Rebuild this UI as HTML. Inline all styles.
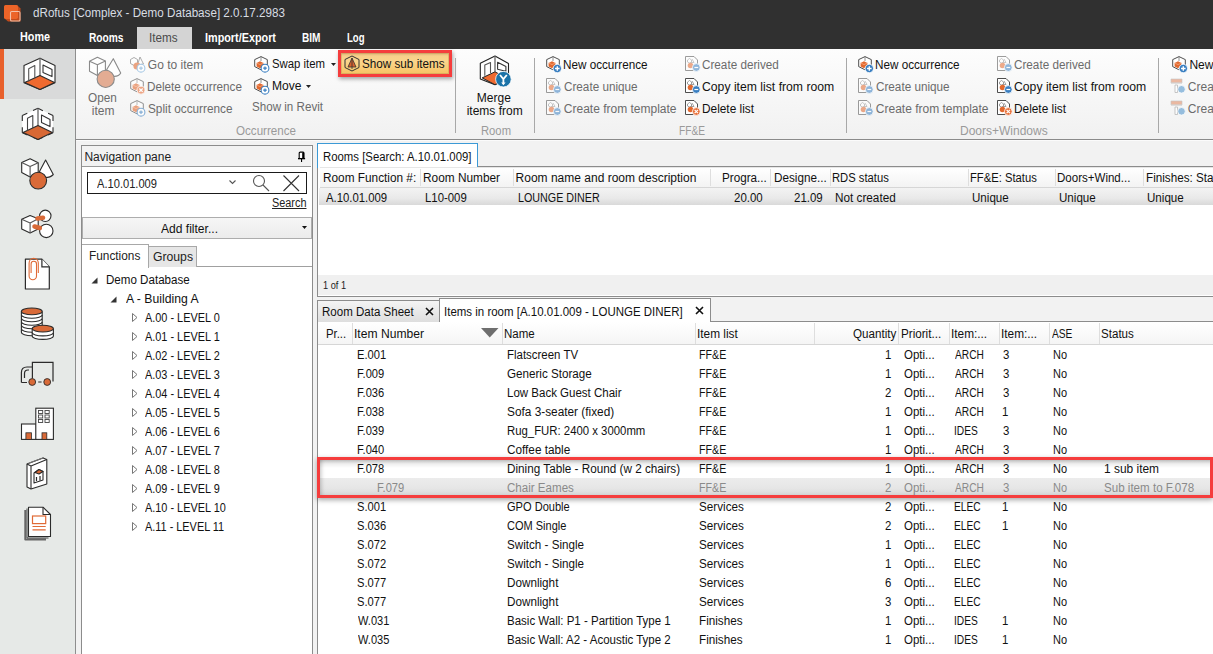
<!DOCTYPE html>
<html><head><meta charset="utf-8"><style>
html,body{margin:0;padding:0;width:1213px;height:654px;overflow:hidden;background:#f2f2f2;position:relative}
body>div,body>svg{position:absolute}
.t{position:absolute;transform-origin:0 0;font-family:"Liberation Sans",sans-serif;font-size:12px;line-height:16px;white-space:nowrap}
</style></head><body>
<div style="left:0px;top:0px;width:1213px;height:49px;background:#303030"></div>
<svg style="left:2px;top:3px" width="22" height="22" viewBox="0 0 22 22"><path d="M3.5 2 H15 L18.5 5.5 V18.5 H6 L2 15 V3.5 Z" fill="#c24b1c"/><rect x="2" y="2" width="14" height="14" rx="1.8" fill="#ec6428"/><rect x="8.5" y="8.5" width="9.5" height="9.5" rx="1.3" fill="none" stroke="#f3cbb6" stroke-width="1.1" opacity="0.9"/></svg>
<div class="t" style="left:32.5px;top:5px;color:#d8dde3;font-size:12.5px;transform:scaleX(0.932);">dRofus [Complex - Demo Database] 2.0.17.2983</div>
<div style="left:137px;top:27px;width:55px;height:22px;background:#d4d4d4"></div>
<div class="t" style="left:20.3px;top:29px;color:#fff;font-size:12.5px;font-weight:bold;transform:scaleX(0.864);">Home</div>
<div class="t" style="left:88.8px;top:30px;color:#fff;font-size:12.5px;font-weight:bold;transform:scaleX(0.814);">Rooms</div>
<div class="t" style="left:148.9px;top:30px;color:#4a4a4a;transform:scaleX(0.975);">Items</div>
<div class="t" style="left:205.3px;top:30px;color:#fff;font-size:12.5px;font-weight:bold;transform:scaleX(0.866);">Import/Export</div>
<div class="t" style="left:301.9px;top:30px;color:#fff;font-size:12.5px;font-weight:bold;transform:scaleX(0.807);">BIM</div>
<div class="t" style="left:347.2px;top:30px;color:#fff;font-size:12.5px;font-weight:bold;transform:scaleX(0.764);">Log</div>
<div style="left:0px;top:49px;width:75px;height:605px;background:#e6e9e7"></div>
<div style="left:75px;top:49px;width:1px;height:605px;background:#8e8e8e"></div>
<div style="left:4px;top:49px;width:71px;height:50px;background:#d9dada"></div>
<div style="left:0px;top:49px;width:4px;height:50px;background:#e8602c"></div>
<div style="left:76px;top:49px;width:1137px;height:90px;background:linear-gradient(#fdfdfd,#f1f1f1)"></div>
<div style="left:76px;top:139px;width:1137px;height:1px;background:#8a8a8a"></div>
<div style="left:76px;top:140px;width:1137px;height:1px;background:#fbfbfb"></div>
<svg style="left:18px;top:54px" width="44" height="40" viewBox="0 0 44 40"><g stroke-linejoin="round" stroke-linecap="round">
<path d="M22 4.3 L37 11.6 V28.8 L22 35.5 L6 28.8 V11.6 Z" fill="#fff" stroke="#2b2b2b" stroke-width="1.1"/>
<path d="M22 4.3 V21.4" stroke="#666" stroke-width="1.3"/>
<path d="M6.7 28.5 L22 21.4 L36.5 28.5 L22 35.5 Z" fill="#ef6a30" stroke="#2b2b2b" stroke-width="1.1"/>
<path d="M10.7 26.9 V14.7 L16.8 11.6 V23.9" fill="none" stroke="#555" stroke-width="1.1"/>
<path d="M25 11 L34 15.6 V22.6 L25 18.4 Z" fill="none" stroke="#333" stroke-width="1.1"/></g></svg>
<svg style="left:18px;top:104px" width="44" height="40" viewBox="0 0 44 40"><g stroke-linejoin="round">
<path d="M20 4.3 L35 11.6 V28.8 L20 35.5 L4.3 28.8 V11.6 Z" fill="#fff" stroke="none"/>
<path d="M20.0 4.3 L15.0 6.6 M20.0 4.3 L24.9 6.7 M35.0 11.6 L30.1 9.2 M35.0 11.6 L35.0 17.1 M35.0 28.8 L35.0 23.3 M35.0 28.8 L30.0 31.0 M20.0 35.5 L25.0 33.3 M20.0 35.5 L14.9 33.3 M4.3 28.8 L9.4 31.0 M4.3 28.8 L4.3 23.3 M4.3 11.6 L4.3 17.1 M4.3 11.6 L9.3 9.3 " stroke="#2b2b2b" stroke-width="1.1" fill="none"/>
<path d="M20 4.3 V21.4" stroke="#666" stroke-width="1.3"/>
<path d="M5 28.5 L20 21.4 L34.3 28.5 L20 35.5 Z" fill="#d86834" stroke="#2b2b2b" stroke-width="1.1"/>
<path d="M9.5 26.9 V14.3 L14.8 11.6 V23.9" fill="none" stroke="#444" stroke-width="1.1"/>
<path d="M23.5 11 L32 15.6 V22.6 L23.5 18.4 Z" fill="none" stroke="#333" stroke-width="1.1"/></g></svg>
<svg style="left:16px;top:152px" width="44" height="44" viewBox="0 0 44 44"><g stroke="#2b2b2b" stroke-width="1.1" fill="#fff" stroke-linejoin="round">
<path d="M5.7 10.4 L14.1 6.7 L22.2 10.8 L22.2 21 L14.1 24.9 L5.7 20.5 Z"/><path d="M5.7 10.4 L14.1 14.5 L22.2 10.8 M14.1 14.5 V24.9" fill="none" stroke="#555"/>
<path d="M29.6 8.1 L37.3 22.5 Q34 26 28 25.6 L23.5 19.5 Z"/>
<circle cx="22.2" cy="28.6" r="8.4" fill="#d96a38"/></g></svg>
<svg style="left:16px;top:202px" width="44" height="44" viewBox="0 0 44 44"><g stroke="#2b2b2b" stroke-width="1.1" fill="#fff" stroke-linejoin="round">
<path d="M5.7 17.2 L14.1 13.5 L22.2 16.8 L22.2 27 L14.1 31 L5.7 26.9 Z"/><path d="M5.7 17.2 L14.1 20.9 L22.2 16.8 M14.1 20.9 V31" fill="none" stroke="#555"/>
<circle cx="29.3" cy="13.8" r="5.7"/><circle cx="30.3" cy="28.9" r="6.7"/></g>
<path d="M21.5 16.5 L27 15.8 M18.5 24.5 L23.8 26" stroke="#d96a38" stroke-width="4.6" stroke-linecap="round"/></svg>
<svg style="left:16px;top:252px" width="44" height="44" viewBox="0 0 44 44"><path d="M9.4 7.1 H25.9 L33.3 14.8 V37 H9.4 Z" fill="#fff" stroke="#2b2b2b" stroke-width="1.2" stroke-linejoin="round"/>
<path d="M25.9 7.1 V14.8 H33.3" fill="#fff" stroke="#2b2b2b" stroke-width="1.2"/>
<path d="M22.3 21 V11 A4.6 4.6 0 0 0 13.1 11 V24 A3.7 3.7 0 0 0 20.5 24 V12 A2.7 2.7 0 0 0 15.1 12 V21" fill="none" stroke="#e06a36" stroke-width="1.1"/></svg>
<svg style="left:16px;top:302px" width="44" height="44" viewBox="0 0 44 44"><path d="M5.4 26.900000000000002 V30.3 A10.4 3.4 0 0 0 26.2 30.3 V26.900000000000002" fill="#fff" stroke="#2b2b2b" stroke-width="1.1"/><path d="M5.4 23.400000000000002 V26.8 A10.4 3.4 0 0 0 26.2 26.8 V23.400000000000002" fill="#fff" stroke="#2b2b2b" stroke-width="1.1"/><path d="M5.4 19.900000000000002 V23.3 A10.4 3.4 0 0 0 26.2 23.3 V19.900000000000002" fill="#fff" stroke="#2b2b2b" stroke-width="1.1"/><path d="M5.4 16.400000000000002 V19.8 A10.4 3.4 0 0 0 26.2 19.8 V16.400000000000002" fill="#fff" stroke="#2b2b2b" stroke-width="1.1"/><path d="M5.4 12.9 V16.3 A10.4 3.4 0 0 0 26.2 16.3 V12.9" fill="#fff" stroke="#2b2b2b" stroke-width="1.1"/><path d="M5.4 9.4 V12.8 A10.4 3.4 0 0 0 26.2 12.8 V9.4" fill="#fff" stroke="#2b2b2b" stroke-width="1.1"/><ellipse cx="15.8" cy="9.4" rx="10.4" ry="3.4" fill="#d96a38" stroke="#2b2b2b" stroke-width="1.1"/><path d="M16.2 30.6 V34 A10.6 3.4 0 0 0 37.4 34 V30.6" fill="#fff" stroke="#2b2b2b" stroke-width="1.1"/><path d="M16.2 27.1 V30.5 A10.6 3.4 0 0 0 37.4 30.5 V27.1" fill="#fff" stroke="#2b2b2b" stroke-width="1.1"/><ellipse cx="26.8" cy="26.6" rx="10.6" ry="3.4" fill="#d96a38" stroke="#2b2b2b" stroke-width="1.1"/></svg>
<svg style="left:16px;top:352px" width="44" height="40" viewBox="0 0 44 40"><g stroke="#2b2b2b" stroke-width="1.2" fill="none">
<path d="M16.4 26.5 V10.3 H37 V29.5"/><path d="M5.4 30.5 V20.5 Q5.4 15 11 15 H16.4 M8.5 26 V21.5 Q8.5 18 12 18 H13"/>
<path d="M5.4 30.5 H11 M22.2 30 H25.6"/></g>
<circle cx="16.2" cy="30" r="3.4" fill="#d96a38" stroke="#2b2b2b" stroke-width="0.9"/><circle cx="31.2" cy="30" r="3.4" fill="#d96a38" stroke="#2b2b2b" stroke-width="0.9"/></svg>
<svg style="left:16px;top:402px" width="44" height="44" viewBox="0 0 44 44"><g stroke="#2b2b2b" stroke-width="1.1" fill="#fff">
<rect x="5.5" y="22" width="14.8" height="15.4"/><rect x="19.8" y="6.2" width="17.6" height="31.2"/></g><rect x="22.5" y="8.5" width="4.2" height="3" fill="none" stroke="#444" stroke-width="0.9"/><rect x="29" y="8.5" width="4.2" height="3" fill="none" stroke="#444" stroke-width="0.9"/><rect x="22.5" y="13" width="4.2" height="3" fill="none" stroke="#444" stroke-width="0.9"/><rect x="29" y="13" width="4.2" height="3" fill="none" stroke="#444" stroke-width="0.9"/><rect x="22.5" y="17.5" width="4.2" height="3" fill="none" stroke="#444" stroke-width="0.9"/><rect x="29" y="17.5" width="4.2" height="3" fill="none" stroke="#444" stroke-width="0.9"/>
<rect x="9.9" y="30.8" width="5.5" height="6.6" fill="#d96a38" stroke="#2b2b2b" stroke-width="0.8"/><rect x="26" y="30.8" width="4.8" height="6.6" fill="#d96a38" stroke="#2b2b2b" stroke-width="0.8"/></svg>
<svg style="left:16px;top:452px" width="44" height="44" viewBox="0 0 44 44"><g stroke="#2b2b2b" stroke-width="1.1" fill="#fff" stroke-linejoin="round">
<path d="M11 12 L27 6 L30.8 7.5 V32 L15 37 L11 35 Z"/><path d="M11 12 L15 14 L30.8 7.5 M15 14 V37" fill="none"/>
<path d="M13 11 L28 5.5 M12 11.5 L27.5 5.8" fill="none" stroke="#777" stroke-width="0.7"/>
<path d="M18 21 L23 17.5 L27 19.5 V28 L18 31 Z"/><path d="M19 20.5 L23 17.5 L27 19.5 L23 22 Z" fill="#d96a38"/>
<path d="M20.5 25 V29 M24 24 V28.5" fill="none" stroke="#2b2b2b" stroke-width="1.2"/></g></svg>
<svg style="left:16px;top:502px" width="44" height="44" viewBox="0 0 44 44"><g stroke-linejoin="round">
<path d="M9.3 8 V37.5 H30" fill="none" stroke="#666" stroke-width="2"/>
<path d="M11 6.5 V36 H32.5" fill="none" stroke="#333" stroke-width="0.9"/>
<path d="M12.5 5.2 H27 L34.5 12.5 V34.5 H12.5 Z" fill="#fff" stroke="#2b2b2b" stroke-width="1.1"/><path d="M27 5.2 V12.5 H34.5" fill="none" stroke="#2b2b2b" stroke-width="1.1"/></g>
<g stroke="#e06a36" stroke-width="1.2" fill="none"><rect x="16.5" y="14" width="13.2" height="7.6"/><path d="M16.5 24.5 H29.7 M16.5 27.8 H29.7"/></g></svg>
<svg style="left:84px;top:52px" width="42" height="40" viewBox="0 0 42 40"><g stroke="#8a8a8a" stroke-width="1.1" fill="#fff" stroke-linejoin="round">
<path d="M5.5 9.2 L13.4 5.2 L21.4 8.9 V20 L13.4 23.5 L5.5 19.3 Z"/><path d="M5.5 9.2 L13.4 12.8 L21.4 8.9 M13.4 12.8 V23.5" fill="none"/>
<path d="M29.3 6.7 L36.7 21.1 Q35 24.5 30 24.4 L22.6 17.7 Z"/>
<circle cx="21.7" cy="26.9" r="8.6" fill="#e3ac93"/></g></svg>
<div class="t" style="left:88.4px;top:90px;color:#6b6b6b;transform:scaleX(0.981);">Open</div>
<div class="t" style="left:91.8px;top:103px;color:#6b6b6b;">item</div>
<svg style="left:129px;top:56px;opacity:0.6" width="17" height="17" viewBox="0 0 17 17"><path d="M1.5 3.5 L5 1.5 L8.5 3.5 V7.5 L5 9.5 L1.5 7.5 Z" fill="#fff" stroke="#555" stroke-width="0.8"/><path d="M11 1 L14.5 8 L8.5 9 Z" fill="#fff" stroke="#555" stroke-width="0.8"/><circle cx="8" cy="10" r="3.6" fill="#e2692f"/><circle cx="12" cy="12.2" r="3.9" fill="#fff" stroke="#6fa8d8" stroke-width="1.1"/><path d="M10.2 12.2 H13.8 M12 10.4 V14" stroke="#6fa8d8" stroke-width="1.2"/></svg>
<div class="t" style="left:147.8px;top:57px;color:#6b6b6b;">Go to item</div>
<svg style="left:129px;top:78px;opacity:0.6" width="17" height="17" viewBox="0 0 17 17"><path d="M8 0.6 L14.3 3.6 V10.6 L8 13.8 L1.7 10.6 V3.6 Z" fill="#fff" stroke="#3a3a3a" stroke-width="0.9"/><path d="M8 0.6 V5" stroke="#777" stroke-width="0.8"/><path d="M7 5.2 L10.4 6.9 V10.6 L7 12.3 L3.6 10.6 V6.9 Z" fill="#e2692f"/><path d="M3.6 6.9 L7 8.6 L10.4 6.9" fill="none" stroke="#f6b08c" stroke-width="0.7"/><circle cx="12" cy="12.2" r="4" fill="#e8703a" stroke="#fff" stroke-width="0.8"/><path d="M10.3 10.5 L13.7 13.9 M13.7 10.5 L10.3 13.9" stroke="#fff" stroke-width="1.3"/></svg>
<div class="t" style="left:147.4px;top:79px;color:#6b6b6b;transform:scaleX(0.975);">Delete occurrence</div>
<svg style="left:129px;top:100px;opacity:0.6" width="17" height="17" viewBox="0 0 17 17"><path d="M8 0.6 L14.3 3.6 V10.6 L8 13.8 L1.7 10.6 V3.6 Z" fill="#fff" stroke="#3a3a3a" stroke-width="0.9"/><path d="M8 0.6 V5" stroke="#777" stroke-width="0.8"/><path d="M7 5.2 L10.4 6.9 V10.6 L7 12.3 L3.6 10.6 V6.9 Z" fill="#e2692f"/><path d="M3.6 6.9 L7 8.6 L10.4 6.9" fill="none" stroke="#f6b08c" stroke-width="0.7"/><circle cx="12" cy="12.2" r="3.9" fill="#fff" stroke="#3a7fc1" stroke-width="1.1"/><path d="M10.2 12.2 H13.8 M12 10.4 V14" stroke="#3a7fc1" stroke-width="1.2"/></svg>
<div class="t" style="left:147.9px;top:101px;color:#6b6b6b;transform:scaleX(0.982);">Split occurrence</div>
<svg style="left:253px;top:56px;opacity:1" width="17" height="17" viewBox="0 0 17 17"><path d="M8 0.6 L14.3 3.6 V10.6 L8 13.8 L1.7 10.6 V3.6 Z" fill="#fff" stroke="#3a3a3a" stroke-width="0.9"/><path d="M8 0.6 V5" stroke="#777" stroke-width="0.8"/><path d="M7 5.2 L10.4 6.9 V10.6 L7 12.3 L3.6 10.6 V6.9 Z" fill="#e2692f"/><path d="M3.6 6.9 L7 8.6 L10.4 6.9" fill="none" stroke="#f6b08c" stroke-width="0.7"/><circle cx="12" cy="12.2" r="3.9" fill="#fff" stroke="#3a7fc1" stroke-width="1.1"/><path d="M10.2 12.2 H13.8 M12 10.4 V14" stroke="#3a7fc1" stroke-width="1.2"/></svg>
<div class="t" style="left:271.8px;top:56px;color:#111;transform:scaleX(0.946);">Swap item</div>
<svg style="left:331px;top:63px" width="5" height="3"><path d="M0 0 H5 L2.5 3 Z" fill="#222"/></svg>
<svg style="left:253px;top:78px;opacity:1" width="17" height="17" viewBox="0 0 17 17"><path d="M8 0.6 L14.3 3.6 V10.6 L8 13.8 L1.7 10.6 V3.6 Z" fill="#fff" stroke="#3a3a3a" stroke-width="0.9"/><path d="M8 0.6 V5" stroke="#777" stroke-width="0.8"/><path d="M7 5.2 L10.4 6.9 V10.6 L7 12.3 L3.6 10.6 V6.9 Z" fill="#e2692f"/><path d="M3.6 6.9 L7 8.6 L10.4 6.9" fill="none" stroke="#f6b08c" stroke-width="0.7"/><circle cx="12" cy="12.2" r="3.9" fill="#fff" stroke="#3a7fc1" stroke-width="1.1"/><path d="M10.2 12.2 H13.8 M12 10.4 V14" stroke="#3a7fc1" stroke-width="1.2"/></svg>
<div class="t" style="left:271.5px;top:78px;color:#111;transform:scaleX(1.005);">Move</div>
<svg style="left:306px;top:85px" width="5" height="3"><path d="M0 0 H5 L2.5 3 Z" fill="#222"/></svg>
<div class="t" style="left:251.8px;top:99px;color:#6b6b6b;transform:scaleX(0.968);">Show in Revit</div>
<div class="t" style="left:236.0px;top:123px;color:#9a9a9a;transform:scaleX(0.967);">Occurrence</div>
<div style="left:338px;top:50px;width:114px;height:27px;background:#f53d3d;box-shadow:1px 2px 4px rgba(0,0,0,0.35)"></div>
<div style="left:341px;top:53px;width:108px;height:21px;background:linear-gradient(#d9b176,#f7d08a 3px,#fad58c 40%,#f6c463);box-shadow:inset 0 0 0 1px rgba(190,150,80,0.45);"></div>
<svg style="left:344px;top:55px" width="16" height="17" viewBox="0 0 16 17"><path d="M8 1 L15 4.5 V12.5 L8 16 L1 12.5 V4.5 Z" fill="none" stroke="#333" stroke-width="1"/><path d="M8 3 L12 12 H4 Z" fill="#d9622e" stroke="#333" stroke-width="0.8"/><path d="M8 3 V14" stroke="#333" stroke-width="0.8"/></svg>
<div class="t" style="left:361.9px;top:56px;color:#111;transform:scaleX(0.975);">Show sub items</div>
<div style="left:455px;top:58px;width:1px;height:75px;background:#a8a8a8"></div>
<svg style="left:470px;top:50px" width="50" height="42" viewBox="0 0 50 42"><g stroke-linejoin="round">
<path d="M25 6.1 L38.5 13.5 V28 L25 34.7 L10.3 28.9 V13.2 Z" fill="#fff" stroke="#222" stroke-width="1.1"/>
<path d="M25 6.1 V21.8" stroke="#666" stroke-width="1.3"/>
<path d="M12.2 27.9 L25 21.8 L36 28 L25 34.7 Z" fill="#ef6a30" stroke="#222" stroke-width="1"/>
<path d="M14.8 25.7 V15.1 L20.5 12.5 V23.1" fill="none" stroke="#555" stroke-width="1.1"/>
<path d="M27.6 12.2 L35.9 16.4 V21.2 L27.6 19.3 Z" fill="none" stroke="#333" stroke-width="1.1"/></g>
<circle cx="33.4" cy="29.2" r="7.8" fill="#1b73a8" stroke="#fff" stroke-width="0.8"/>
<path d="M30 25 L33.4 29 L36.8 25 M33.4 29 V33.5" fill="none" stroke="#fff" stroke-width="1.8"/><path d="M31.2 32.5 L33.4 35.2 L35.6 32.5 Z" fill="#fff"/></svg>
<div class="t" style="left:476.8px;top:90px;color:#111;">Merge</div>
<div class="t" style="left:466.7px;top:102.5px;color:#111;">items from</div>
<div class="t" style="left:481.3px;top:123px;color:#9a9a9a;transform:scaleX(0.937);">Room</div>
<div style="left:534px;top:58px;width:1px;height:75px;background:#a8a8a8"></div>
<svg style="left:545px;top:56px;opacity:1" width="17" height="17" viewBox="0 0 17 17"><path d="M8 0.6 L14.3 3.6 V10.6 L8 13.8 L1.7 10.6 V3.6 Z" fill="#fff" stroke="#3a3a3a" stroke-width="0.9"/><path d="M8 0.6 V5" stroke="#777" stroke-width="0.8"/><path d="M7 5.2 L10.4 6.9 V10.6 L7 12.3 L3.6 10.6 V6.9 Z" fill="#e2692f"/><path d="M3.6 6.9 L7 8.6 L10.4 6.9" fill="none" stroke="#f6b08c" stroke-width="0.7"/><circle cx="12.3" cy="12.5" r="4.2" fill="#3a7fc1" stroke="#fff" stroke-width="0.8"/><path d="M10 12.5 H14.6 M12.3 10.2 V14.8" stroke="#fff" stroke-width="1.4"/></svg>
<div class="t" style="left:563.4px;top:57px;color:#111;transform:scaleX(0.975);">New occurrence</div>
<svg style="left:545px;top:77px;opacity:0.55" width="17" height="17" viewBox="0 0 17 17"><path d="M1.5 1.5 H10 L13.5 5 V15.5 H1.5 Z" fill="#fff" stroke="#3a3a3a" stroke-width="0.9"/><path d="M3.5 5 L5.5 3.5 L7.5 5 V7 L5.5 8 L3.5 7 Z M8 4 L10 7.5 H7" fill="none" stroke="#666" stroke-width="0.6"/><circle cx="6.5" cy="10.5" r="2.8" fill="#e2692f"/><circle cx="12.3" cy="12.5" r="3.9" fill="#3a7fc1" stroke="#fff" stroke-width="0.8"/><path d="M10.4 12.5 H14.2" stroke="#fff" stroke-width="1.2"/></svg>
<div class="t" style="left:563.8px;top:79px;color:#6b6b6b;transform:scaleX(0.976);">Create unique</div>
<svg style="left:545px;top:99px;opacity:0.55" width="17" height="17" viewBox="0 0 17 17"><path d="M1.5 1.5 H10 L13.5 5 V15.5 H1.5 Z" fill="#fff" stroke="#3a3a3a" stroke-width="0.9"/><path d="M3.5 5 L5.5 3.5 L7.5 5 V7 L5.5 8 L3.5 7 Z M8 4 L10 7.5 H7" fill="none" stroke="#666" stroke-width="0.6"/><circle cx="6.5" cy="10.5" r="2.8" fill="#e2692f"/><circle cx="12.3" cy="12.5" r="3.9" fill="#3a7fc1" stroke="#fff" stroke-width="0.8"/><path d="M10.4 12.5 H14.2" stroke="#fff" stroke-width="1.2"/></svg>
<div class="t" style="left:563.8px;top:101px;color:#6b6b6b;">Create from template</div>
<svg style="left:684px;top:55px;opacity:0.55" width="17" height="17" viewBox="0 0 17 17"><path d="M1.5 1.5 H10 L13.5 5 V15.5 H1.5 Z" fill="#fff" stroke="#3a3a3a" stroke-width="0.9"/><path d="M3.5 5 L5.5 3.5 L7.5 5 V7 L5.5 8 L3.5 7 Z M8 4 L10 7.5 H7" fill="none" stroke="#666" stroke-width="0.6"/><circle cx="6.5" cy="10.5" r="2.8" fill="#e2692f"/><circle cx="12.3" cy="12.5" r="3.9" fill="#3a7fc1" stroke="#fff" stroke-width="0.8"/><path d="M10.4 12.5 H14.2" stroke="#fff" stroke-width="1.2"/></svg>
<div class="t" style="left:702.4px;top:57px;color:#6b6b6b;transform:scaleX(0.976);">Create derived</div>
<svg style="left:684px;top:77px;opacity:1" width="17" height="17" viewBox="0 0 17 17"><path d="M1.5 1.5 H10 L13.5 5 V15.5 H1.5 Z" fill="#fff" stroke="#3a3a3a" stroke-width="0.9"/><path d="M3.5 5 L5.5 3.5 L7.5 5 V7 L5.5 8 L3.5 7 Z M8 4 L10 7.5 H7" fill="none" stroke="#666" stroke-width="0.6"/><circle cx="6.5" cy="10.5" r="2.8" fill="#e2692f"/><circle cx="12.3" cy="12.5" r="3.9" fill="#3a7fc1" stroke="#fff" stroke-width="0.8"/><path d="M10.4 12.5 H14.2" stroke="#fff" stroke-width="1.2"/></svg>
<div class="t" style="left:702.4px;top:79px;color:#111;transform:scaleX(1.017);">Copy item list from room</div>
<svg style="left:684px;top:99px;opacity:1" width="17" height="17" viewBox="0 0 17 17"><path d="M1.5 1.5 H10 L13.5 5 V15.5 H1.5 Z" fill="#fff" stroke="#3a3a3a" stroke-width="0.9"/><path d="M3.5 5 L5.5 3.5 L7.5 5 V7 L5.5 8 L3.5 7 Z M8 4 L10 7.5 H7" fill="none" stroke="#666" stroke-width="0.6"/><circle cx="6.5" cy="10.5" r="2.8" fill="#e2692f"/><circle cx="12.3" cy="12.5" r="3.9" fill="#e8703a" stroke="#fff" stroke-width="0.8"/><path d="M10.6 10.8 L14 14.2 M14 10.8 L10.6 14.2" stroke="#fff" stroke-width="1.2"/></svg>
<div class="t" style="left:702.0px;top:101px;color:#111;transform:scaleX(0.987);">Delete list</div>
<div class="t" style="left:679.0px;top:123px;color:#9a9a9a;transform:scaleX(0.848);">FF&amp;E</div>
<div style="left:846px;top:58px;width:1px;height:75px;background:#a8a8a8"></div>
<svg style="left:857px;top:56px;opacity:1" width="17" height="17" viewBox="0 0 17 17"><path d="M8 0.6 L14.3 3.6 V10.6 L8 13.8 L1.7 10.6 V3.6 Z" fill="#fff" stroke="#3a3a3a" stroke-width="0.9"/><path d="M8 0.6 V5" stroke="#777" stroke-width="0.8"/><path d="M7 5.2 L10.4 6.9 V10.6 L7 12.3 L3.6 10.6 V6.9 Z" fill="#e2692f"/><path d="M3.6 6.9 L7 8.6 L10.4 6.9" fill="none" stroke="#f6b08c" stroke-width="0.7"/><circle cx="12.3" cy="12.5" r="4.2" fill="#3a7fc1" stroke="#fff" stroke-width="0.8"/><path d="M10 12.5 H14.6 M12.3 10.2 V14.8" stroke="#fff" stroke-width="1.4"/></svg>
<div class="t" style="left:875.4px;top:57px;color:#111;transform:scaleX(0.975);">New occurrence</div>
<svg style="left:857px;top:77px;opacity:0.55" width="17" height="17" viewBox="0 0 17 17"><path d="M1.5 1.5 H10 L13.5 5 V15.5 H1.5 Z" fill="#fff" stroke="#3a3a3a" stroke-width="0.9"/><path d="M3.5 5 L5.5 3.5 L7.5 5 V7 L5.5 8 L3.5 7 Z M8 4 L10 7.5 H7" fill="none" stroke="#666" stroke-width="0.6"/><circle cx="6.5" cy="10.5" r="2.8" fill="#e2692f"/><circle cx="12.3" cy="12.5" r="3.9" fill="#3a7fc1" stroke="#fff" stroke-width="0.8"/><path d="M10.4 12.5 H14.2" stroke="#fff" stroke-width="1.2"/></svg>
<div class="t" style="left:875.8px;top:79px;color:#6b6b6b;transform:scaleX(0.976);">Create unique</div>
<svg style="left:857px;top:99px;opacity:0.55" width="17" height="17" viewBox="0 0 17 17"><path d="M1.5 1.5 H10 L13.5 5 V15.5 H1.5 Z" fill="#fff" stroke="#3a3a3a" stroke-width="0.9"/><path d="M3.5 5 L5.5 3.5 L7.5 5 V7 L5.5 8 L3.5 7 Z M8 4 L10 7.5 H7" fill="none" stroke="#666" stroke-width="0.6"/><circle cx="6.5" cy="10.5" r="2.8" fill="#e2692f"/><circle cx="12.3" cy="12.5" r="3.9" fill="#3a7fc1" stroke="#fff" stroke-width="0.8"/><path d="M10.4 12.5 H14.2" stroke="#fff" stroke-width="1.2"/></svg>
<div class="t" style="left:875.8px;top:101px;color:#6b6b6b;">Create from template</div>
<svg style="left:996px;top:55px;opacity:0.55" width="17" height="17" viewBox="0 0 17 17"><path d="M1.5 1.5 H10 L13.5 5 V15.5 H1.5 Z" fill="#fff" stroke="#3a3a3a" stroke-width="0.9"/><path d="M3.5 5 L5.5 3.5 L7.5 5 V7 L5.5 8 L3.5 7 Z M8 4 L10 7.5 H7" fill="none" stroke="#666" stroke-width="0.6"/><circle cx="6.5" cy="10.5" r="2.8" fill="#e2692f"/><circle cx="12.3" cy="12.5" r="3.9" fill="#3a7fc1" stroke="#fff" stroke-width="0.8"/><path d="M10.4 12.5 H14.2" stroke="#fff" stroke-width="1.2"/></svg>
<div class="t" style="left:1014.4px;top:57px;color:#6b6b6b;transform:scaleX(0.976);">Create derived</div>
<svg style="left:996px;top:77px;opacity:1" width="17" height="17" viewBox="0 0 17 17"><path d="M1.5 1.5 H10 L13.5 5 V15.5 H1.5 Z" fill="#fff" stroke="#3a3a3a" stroke-width="0.9"/><path d="M3.5 5 L5.5 3.5 L7.5 5 V7 L5.5 8 L3.5 7 Z M8 4 L10 7.5 H7" fill="none" stroke="#666" stroke-width="0.6"/><circle cx="6.5" cy="10.5" r="2.8" fill="#e2692f"/><circle cx="12.3" cy="12.5" r="3.9" fill="#3a7fc1" stroke="#fff" stroke-width="0.8"/><path d="M10.4 12.5 H14.2" stroke="#fff" stroke-width="1.2"/></svg>
<div class="t" style="left:1014.4px;top:79px;color:#111;transform:scaleX(1.017);">Copy item list from room</div>
<svg style="left:996px;top:99px;opacity:1" width="17" height="17" viewBox="0 0 17 17"><path d="M1.5 1.5 H10 L13.5 5 V15.5 H1.5 Z" fill="#fff" stroke="#3a3a3a" stroke-width="0.9"/><path d="M3.5 5 L5.5 3.5 L7.5 5 V7 L5.5 8 L3.5 7 Z M8 4 L10 7.5 H7" fill="none" stroke="#666" stroke-width="0.6"/><circle cx="6.5" cy="10.5" r="2.8" fill="#e2692f"/><circle cx="12.3" cy="12.5" r="3.9" fill="#e8703a" stroke="#fff" stroke-width="0.8"/><path d="M10.6 10.8 L14 14.2 M14 10.8 L10.6 14.2" stroke="#fff" stroke-width="1.2"/></svg>
<div class="t" style="left:1014.0px;top:101px;color:#111;transform:scaleX(0.987);">Delete list</div>
<div class="t" style="left:960.0px;top:123px;color:#9a9a9a;">Doors+Windows</div>
<div style="left:1158px;top:58px;width:1px;height:75px;background:#a8a8a8"></div>
<svg style="left:1171px;top:56px;opacity:1" width="17" height="17" viewBox="0 0 17 17"><path d="M8 0.6 L14.3 3.6 V10.6 L8 13.8 L1.7 10.6 V3.6 Z" fill="#fff" stroke="#3a3a3a" stroke-width="0.9"/><path d="M8 0.6 V5" stroke="#777" stroke-width="0.8"/><path d="M7 5.2 L10.4 6.9 V10.6 L7 12.3 L3.6 10.6 V6.9 Z" fill="#e2692f"/><path d="M3.6 6.9 L7 8.6 L10.4 6.9" fill="none" stroke="#f6b08c" stroke-width="0.7"/><circle cx="12.3" cy="12.5" r="4.2" fill="#3a7fc1" stroke="#fff" stroke-width="0.8"/><path d="M10 12.5 H14.6 M12.3 10.2 V14.8" stroke="#fff" stroke-width="1.4"/></svg>
<div class="t" style="left:1189.4px;top:57px;color:#111;">New</div>
<svg style="left:1170px;top:77px;opacity:0.8" width="17" height="17" viewBox="0 0 17 17"><path d="M1 2 H12 V6 H1 Z" fill="#e8a98c" stroke="#bbb" stroke-width="0.6"/><path d="M1 6 H12" stroke="#ccc" stroke-width="1"/><path d="M5 8 V15.5 H7.5 V8 Z" fill="#fff" stroke="#aaa" stroke-width="0.8"/><circle cx="11.5" cy="12.3" r="3.8" fill="#7fb0d8" stroke="#fff" stroke-width="0.8"/></svg>
<div class="t" style="left:1187.8px;top:79px;color:#6b6b6b;">Create</div>
<svg style="left:1170px;top:99px;opacity:0.8" width="17" height="17" viewBox="0 0 17 17"><path d="M1 2 H12 V6 H1 Z" fill="#e8a98c" stroke="#bbb" stroke-width="0.6"/><path d="M1 6 H12" stroke="#ccc" stroke-width="1"/><path d="M5 8 V15.5 H7.5 V8 Z" fill="#fff" stroke="#aaa" stroke-width="0.8"/><circle cx="11.5" cy="12.3" r="3.8" fill="#7fb0d8" stroke="#fff" stroke-width="0.8"/></svg>
<div class="t" style="left:1187.8px;top:101px;color:#6b6b6b;">Create</div>
<div style="left:81px;top:145px;width:230px;height:520px;border:1px solid #8c8c8c;background:#fff"></div>
<div style="left:82px;top:146px;width:229px;height:20px;background:#f2f2f2"></div>
<div style="left:82px;top:166px;width:229px;height:1px;background:#9a9a9a"></div>
<div class="t" style="left:84.4px;top:149px;color:#222;">Navigation pane</div>
<svg style="left:297px;top:151px" width="9" height="12" viewBox="0 0 9 12"><path d="M2.2 7.2 V2.2 Q2.2 1.1 3.3 1.1 H6 Q7 1.1 7 2.2 V7.2" fill="#fff" stroke="#000" stroke-width="1.1"/><rect x="5.2" y="1.5" width="1.8" height="5.7" fill="#000"/><rect x="1" y="7" width="7.1" height="1.3" fill="#000"/><rect x="4" y="8" width="1.1" height="3" fill="#000"/></svg>
<div style="left:87px;top:172px;width:218px;height:20px;border:1.5px solid #1a1a1a;background:#fff"></div>
<div class="t" style="left:97.4px;top:176px;color:#222;transform:scaleX(0.927);">A.10.01.009</div>
<svg style="left:229px;top:180px" width="7" height="5"><path d="M0.5 0.5 L3.5 3.5 L6.5 0.5" fill="none" stroke="#555" stroke-width="1.1"/></svg>
<svg style="left:251px;top:174px" width="20" height="18"><circle cx="8" cy="7" r="5.5" fill="none" stroke="#555" stroke-width="1.1"/><path d="M12 11 L18 17" stroke="#555" stroke-width="1.1"/></svg>
<svg style="left:283px;top:175px" width="17" height="17"><path d="M0.5 0.5 L16 16 M16 0.5 L0.5 16" stroke="#333" stroke-width="1.1"/></svg>
<div class="t" style="left:271.5px;top:195px;color:#222;transform:scaleX(0.907);text-decoration:underline;">Search</div>
<div style="left:82px;top:217px;width:228px;height:20px;border:1px solid #adadad;background:linear-gradient(#f6f6f6,#ececec)"></div>
<div class="t" style="left:161.0px;top:220.5px;color:#111;transform:scaleX(1.005);">Add filter...</div>
<svg style="left:302px;top:226px" width="5" height="3"><path d="M0 0 H5 L2.5 3 Z" fill="#111"/></svg>
<div style="left:82px;top:266px;width:230px;height:1px;background:#a0a0a0"></div>
<div style="left:148px;top:246px;width:47px;height:20px;border:1px solid #a8a8a8;border-bottom:none;background:#e6e6e6"></div>
<div style="left:82px;top:244px;width:66px;height:23px;border:1px solid #a8a8a8;border-bottom:none;border-left:none;background:#fff"></div>
<div class="t" style="left:89.3px;top:248px;color:#222;transform:scaleX(0.986);">Functions</div>
<div class="t" style="left:152.6px;top:249px;color:#222;transform:scaleX(1.016);">Groups</div>
<svg style="left:91px;top:277px" width="7" height="7"><path d="M6.5 0.5 V6.5 H0.5 Z" fill="#333"/></svg>
<div class="t" style="left:106.1px;top:272px;color:#111;transform:scaleX(0.965);">Demo Database</div>
<svg style="left:110px;top:296px" width="7" height="7"><path d="M6.5 0.5 V6.5 H0.5 Z" fill="#333"/></svg>
<div class="t" style="left:126.0px;top:291px;color:#111;transform:scaleX(1.018);">A - Building A</div>
<svg style="left:132px;top:313px" width="6" height="9"><path d="M0.5 0.5 L5 4.5 L0.5 8.5 Z" fill="none" stroke="#777" stroke-width="1"/></svg>
<div class="t" style="left:144.7px;top:310px;color:#111;transform:scaleX(0.908);">A.00 - LEVEL 0</div>
<svg style="left:132px;top:332px" width="6" height="9"><path d="M0.5 0.5 L5 4.5 L0.5 8.5 Z" fill="none" stroke="#777" stroke-width="1"/></svg>
<div class="t" style="left:144.7px;top:329px;color:#111;transform:scaleX(0.908);">A.01 - LEVEL 1</div>
<svg style="left:132px;top:351px" width="6" height="9"><path d="M0.5 0.5 L5 4.5 L0.5 8.5 Z" fill="none" stroke="#777" stroke-width="1"/></svg>
<div class="t" style="left:144.7px;top:348px;color:#111;transform:scaleX(0.908);">A.02 - LEVEL 2</div>
<svg style="left:132px;top:370px" width="6" height="9"><path d="M0.5 0.5 L5 4.5 L0.5 8.5 Z" fill="none" stroke="#777" stroke-width="1"/></svg>
<div class="t" style="left:144.7px;top:367px;color:#111;transform:scaleX(0.908);">A.03 - LEVEL 3</div>
<svg style="left:132px;top:389px" width="6" height="9"><path d="M0.5 0.5 L5 4.5 L0.5 8.5 Z" fill="none" stroke="#777" stroke-width="1"/></svg>
<div class="t" style="left:144.7px;top:386px;color:#111;transform:scaleX(0.908);">A.04 - LEVEL 4</div>
<svg style="left:132px;top:408px" width="6" height="9"><path d="M0.5 0.5 L5 4.5 L0.5 8.5 Z" fill="none" stroke="#777" stroke-width="1"/></svg>
<div class="t" style="left:144.7px;top:405px;color:#111;transform:scaleX(0.908);">A.05 - LEVEL 5</div>
<svg style="left:132px;top:427px" width="6" height="9"><path d="M0.5 0.5 L5 4.5 L0.5 8.5 Z" fill="none" stroke="#777" stroke-width="1"/></svg>
<div class="t" style="left:144.7px;top:424px;color:#111;transform:scaleX(0.908);">A.06 - LEVEL 6</div>
<svg style="left:132px;top:446px" width="6" height="9"><path d="M0.5 0.5 L5 4.5 L0.5 8.5 Z" fill="none" stroke="#777" stroke-width="1"/></svg>
<div class="t" style="left:144.7px;top:443px;color:#111;transform:scaleX(0.908);">A.07 - LEVEL 7</div>
<svg style="left:132px;top:465px" width="6" height="9"><path d="M0.5 0.5 L5 4.5 L0.5 8.5 Z" fill="none" stroke="#777" stroke-width="1"/></svg>
<div class="t" style="left:144.7px;top:462px;color:#111;transform:scaleX(0.908);">A.08 - LEVEL 8</div>
<svg style="left:132px;top:484px" width="6" height="9"><path d="M0.5 0.5 L5 4.5 L0.5 8.5 Z" fill="none" stroke="#777" stroke-width="1"/></svg>
<div class="t" style="left:144.7px;top:481px;color:#111;transform:scaleX(0.908);">A.09 - LEVEL 9</div>
<svg style="left:132px;top:503px" width="6" height="9"><path d="M0.5 0.5 L5 4.5 L0.5 8.5 Z" fill="none" stroke="#777" stroke-width="1"/></svg>
<div class="t" style="left:144.7px;top:500px;color:#111;transform:scaleX(0.908);">A.10 - LEVEL 10</div>
<svg style="left:132px;top:522px" width="6" height="9"><path d="M0.5 0.5 L5 4.5 L0.5 8.5 Z" fill="none" stroke="#777" stroke-width="1"/></svg>
<div class="t" style="left:144.7px;top:519px;color:#111;transform:scaleX(0.908);">A.11 - LEVEL 11</div>
<div style="left:317px;top:166px;width:900px;height:129px;border:1px solid #8c8c8c;background:#fff"></div>
<div style="left:317px;top:143px;width:159px;height:24px;border:1px solid #3c9ad6;border-bottom:none;background:#fff"></div>
<div class="t" style="left:322.5px;top:149px;color:#111;transform:scaleX(0.947);">Rooms [Search: A.10.01.009]</div>
<div style="left:320px;top:167px;width:893px;height:21px;background:linear-gradient(#ffffff,#f3f3f3);border-top:1px solid #e6e6e6;border-bottom:1px solid #d6d6d6;box-sizing:border-box"></div>
<div style="left:420px;top:169px;width:1px;height:17px;background:#dedede"></div>
<div style="left:513px;top:169px;width:1px;height:17px;background:#dedede"></div>
<div style="left:710px;top:169px;width:1px;height:17px;background:#dedede"></div>
<div style="left:770px;top:169px;width:1px;height:17px;background:#dedede"></div>
<div style="left:830px;top:169px;width:1px;height:17px;background:#dedede"></div>
<div style="left:968px;top:169px;width:1px;height:17px;background:#dedede"></div>
<div style="left:1055px;top:169px;width:1px;height:17px;background:#dedede"></div>
<div style="left:1143px;top:169px;width:1px;height:17px;background:#dedede"></div>
<div class="t" style="left:322.8px;top:170px;color:#111;transform:scaleX(0.984);">Room Function #:</div>
<div class="t" style="left:422.7px;top:170px;color:#111;transform:scaleX(0.987);">Room Number</div>
<div class="t" style="left:515.6px;top:170px;color:#111;">Room name and room description</div>
<div class="t" style="left:722.2px;top:170px;color:#111;transform:scaleX(0.974);">Progra...</div>
<div class="t" style="left:774.0px;top:170px;color:#111;transform:scaleX(0.976);">Designe...</div>
<div class="t" style="left:832.1px;top:170px;color:#111;transform:scaleX(0.937);">RDS status</div>
<div class="t" style="left:970.1px;top:170px;color:#111;transform:scaleX(0.936);">FF&amp;E: Status</div>
<div class="t" style="left:1057.1px;top:170px;color:#111;transform:scaleX(0.961);">Doors+Wind...</div>
<div class="t" style="left:1146.0px;top:170px;color:#111;transform:scaleX(0.973);">Finishes: Status</div>
<div style="left:319px;top:188px;width:894px;height:17px;background:linear-gradient(#f3f3f3,#e9e9e9 60%,#d9d9d9)"></div>
<div class="t" style="left:325.5px;top:190px;color:#111;transform:scaleX(0.945);">A.10.01.009</div>
<div class="t" style="left:424.7px;top:190px;color:#111;transform:scaleX(0.947);">L10-009</div>
<div class="t" style="left:517.8px;top:190px;color:#111;transform:scaleX(0.895);">LOUNGE DINER</div>
<div class="t" style="left:733.7px;top:190px;color:#111;transform:scaleX(0.956);">20.00</div>
<div class="t" style="left:794.1px;top:190px;color:#111;transform:scaleX(0.956);">21.09</div>
<div class="t" style="left:834.7px;top:190px;color:#111;transform:scaleX(0.979);">Not created</div>
<div class="t" style="left:972.1px;top:190px;color:#111;transform:scaleX(0.966);">Unique</div>
<div class="t" style="left:1059.1px;top:190px;color:#111;transform:scaleX(0.966);">Unique</div>
<div class="t" style="left:1147.1px;top:190px;color:#111;transform:scaleX(0.966);">Unique</div>
<div style="left:318px;top:275px;width:895px;height:20px;background:#f0f0f0"></div>
<div class="t" style="left:323.3px;top:277px;color:#222;font-size:11px;transform:scaleX(0.836);">1 of 1</div>
<div style="left:317px;top:321px;width:900px;height:340px;border:1px solid #8c8c8c;background:#fff"></div>
<div style="left:317px;top:300px;width:122px;height:21px;border:1px solid #8c8c8c;border-bottom:none;background:linear-gradient(#f4f4f4,#dedede)"></div>
<div class="t" style="left:322.4px;top:304px;color:#111;transform:scaleX(0.961);">Room Data Sheet</div>
<svg style="left:425px;top:307px" width="9" height="9"><path d="M1 1 L8 8 M8 1 L1 8" stroke="#111" stroke-width="1.6"/></svg>
<div style="left:439px;top:298px;width:270px;height:24px;border:1px solid #8c8c8c;border-bottom:none;background:#fff"></div>
<div class="t" style="left:444.1px;top:304px;color:#111;transform:scaleX(0.957);">Items in room [A.10.01.009 - LOUNGE DINER]</div>
<svg style="left:695px;top:306px" width="9" height="9"><path d="M1 1 L8 8 M8 1 L1 8" stroke="#111" stroke-width="1.6"/></svg>
<div style="left:318px;top:322px;width:895px;height:23px;background:linear-gradient(#ffffff,#f5f5f5);border-bottom:1px solid #d6d6d6;box-sizing:border-box"></div>
<div style="left:352px;top:323px;width:1px;height:21px;background:#dedede"></div>
<div style="left:502px;top:323px;width:1px;height:21px;background:#dedede"></div>
<div style="left:695px;top:323px;width:1px;height:21px;background:#dedede"></div>
<div style="left:814px;top:323px;width:1px;height:21px;background:#dedede"></div>
<div style="left:898px;top:323px;width:1px;height:21px;background:#dedede"></div>
<div style="left:949px;top:323px;width:1px;height:21px;background:#dedede"></div>
<div style="left:999px;top:323px;width:1px;height:21px;background:#dedede"></div>
<div style="left:1049px;top:323px;width:1px;height:21px;background:#dedede"></div>
<div style="left:1099px;top:323px;width:1px;height:21px;background:#dedede"></div>
<div class="t" style="left:325.8px;top:326px;color:#111;transform:scaleX(0.944);">Pr...</div>
<div class="t" style="left:353.9px;top:326px;color:#111;transform:scaleX(1.009);">Item Number</div>
<div class="t" style="left:504.4px;top:326px;color:#111;transform:scaleX(0.959);">Name</div>
<div class="t" style="left:696.5px;top:326px;color:#111;transform:scaleX(0.988);">Item list</div>
<svg style="left:481px;top:328px" width="18" height="10"><path d="M0 0 H17.5 L8.75 9.5 Z" fill="#6e6e6e"/></svg>
<div class="t" style="left:852.7px;top:326px;color:#111;transform:scaleX(0.969);">Quantity</div>
<div class="t" style="left:901.0px;top:326px;color:#111;transform:scaleX(0.971);">Priorit...</div>
<div class="t" style="left:951.3px;top:326px;color:#111;transform:scaleX(0.986);">Item:...</div>
<div class="t" style="left:1000.9px;top:326px;color:#111;transform:scaleX(0.986);">Item:...</div>
<div class="t" style="left:1052.3px;top:326px;color:#111;transform:scaleX(0.850);">ASE</div>
<div class="t" style="left:1101.3px;top:326px;color:#111;transform:scaleX(0.965);">Status</div>
<div style="left:318px;top:460px;width:895px;height:18px;background:linear-gradient(#c6c6c6,#efefef 4px,#ffffff 8px)"></div>
<div style="left:318px;top:478px;width:895px;height:17px;background:linear-gradient(#ececec,#e6e6e6 60%,#d9d9d9)"></div>
<div class="t" style="left:356.8px;top:347px;color:#111;transform:scaleX(0.930);">E.001</div>
<div class="t" style="left:506.7px;top:347px;color:#111;transform:scaleX(0.954);">Flatscreen TV</div>
<div class="t" style="left:698.9px;top:347px;color:#111;transform:scaleX(0.889);">FF&amp;E</div>
<div class="t" style="left:885.2px;top:347px;color:#111;transform:scaleX(0.950);">1</div>
<div class="t" style="left:903.5px;top:347px;color:#111;transform:scaleX(0.956);">Opti...</div>
<div class="t" style="left:954.6px;top:347px;color:#111;transform:scaleX(0.850);">ARCH</div>
<div class="t" style="left:1002.6px;top:347px;color:#111;transform:scaleX(0.950);">3</div>
<div class="t" style="left:1053.1px;top:347px;color:#111;transform:scaleX(0.915);">No</div>
<div class="t" style="left:356.8px;top:366px;color:#111;transform:scaleX(0.928);">F.009</div>
<div class="t" style="left:507.0px;top:366px;color:#111;transform:scaleX(0.970);">Generic Storage</div>
<div class="t" style="left:698.9px;top:366px;color:#111;transform:scaleX(0.889);">FF&amp;E</div>
<div class="t" style="left:885.2px;top:366px;color:#111;transform:scaleX(0.950);">1</div>
<div class="t" style="left:903.5px;top:366px;color:#111;transform:scaleX(0.956);">Opti...</div>
<div class="t" style="left:954.6px;top:366px;color:#111;transform:scaleX(0.850);">ARCH</div>
<div class="t" style="left:1002.6px;top:366px;color:#111;transform:scaleX(0.950);">3</div>
<div class="t" style="left:1053.1px;top:366px;color:#111;transform:scaleX(0.915);">No</div>
<div class="t" style="left:356.8px;top:385px;color:#111;transform:scaleX(0.928);">F.036</div>
<div class="t" style="left:506.7px;top:385px;color:#111;transform:scaleX(0.959);">Low Back Guest Chair</div>
<div class="t" style="left:698.9px;top:385px;color:#111;transform:scaleX(0.889);">FF&amp;E</div>
<div class="t" style="left:885.2px;top:385px;color:#111;transform:scaleX(0.950);">2</div>
<div class="t" style="left:903.5px;top:385px;color:#111;transform:scaleX(0.956);">Opti...</div>
<div class="t" style="left:954.6px;top:385px;color:#111;transform:scaleX(0.850);">ARCH</div>
<div class="t" style="left:1002.6px;top:385px;color:#111;transform:scaleX(0.950);">3</div>
<div class="t" style="left:1053.1px;top:385px;color:#111;transform:scaleX(0.915);">No</div>
<div class="t" style="left:356.8px;top:404px;color:#111;transform:scaleX(0.928);">F.038</div>
<div class="t" style="left:507.1px;top:404px;color:#111;transform:scaleX(0.986);">Sofa 3-seater (fixed)</div>
<div class="t" style="left:698.9px;top:404px;color:#111;transform:scaleX(0.889);">FF&amp;E</div>
<div class="t" style="left:885.2px;top:404px;color:#111;transform:scaleX(0.950);">1</div>
<div class="t" style="left:903.5px;top:404px;color:#111;transform:scaleX(0.956);">Opti...</div>
<div class="t" style="left:954.6px;top:404px;color:#111;transform:scaleX(0.850);">ARCH</div>
<div class="t" style="left:1002.1px;top:404px;color:#111;transform:scaleX(0.950);">1</div>
<div class="t" style="left:1053.1px;top:404px;color:#111;transform:scaleX(0.915);">No</div>
<div class="t" style="left:356.8px;top:423px;color:#111;transform:scaleX(0.928);">F.039</div>
<div class="t" style="left:506.7px;top:423px;color:#111;transform:scaleX(0.947);">Rug_FUR: 2400 x 3000mm</div>
<div class="t" style="left:698.9px;top:423px;color:#111;transform:scaleX(0.889);">FF&amp;E</div>
<div class="t" style="left:885.2px;top:423px;color:#111;transform:scaleX(0.950);">1</div>
<div class="t" style="left:903.5px;top:423px;color:#111;transform:scaleX(0.956);">Opti...</div>
<div class="t" style="left:953.7px;top:423px;color:#111;transform:scaleX(0.850);">IDES</div>
<div class="t" style="left:1002.6px;top:423px;color:#111;transform:scaleX(0.950);">3</div>
<div class="t" style="left:1053.1px;top:423px;color:#111;transform:scaleX(0.915);">No</div>
<div class="t" style="left:356.8px;top:442px;color:#111;transform:scaleX(0.928);">F.040</div>
<div class="t" style="left:507.0px;top:442px;color:#111;transform:scaleX(0.980);">Coffee table</div>
<div class="t" style="left:698.9px;top:442px;color:#111;transform:scaleX(0.889);">FF&amp;E</div>
<div class="t" style="left:885.2px;top:442px;color:#111;transform:scaleX(0.950);">1</div>
<div class="t" style="left:903.5px;top:442px;color:#111;transform:scaleX(0.956);">Opti...</div>
<div class="t" style="left:954.6px;top:442px;color:#111;transform:scaleX(0.850);">ARCH</div>
<div class="t" style="left:1002.6px;top:442px;color:#111;transform:scaleX(0.950);">3</div>
<div class="t" style="left:1053.1px;top:442px;color:#111;transform:scaleX(0.915);">No</div>
<div class="t" style="left:356.8px;top:461px;color:#111;transform:scaleX(0.928);">F.078</div>
<div class="t" style="left:506.6px;top:461px;color:#111;transform:scaleX(0.977);">Dining Table - Round (w 2 chairs)</div>
<div class="t" style="left:698.9px;top:461px;color:#111;transform:scaleX(0.889);">FF&amp;E</div>
<div class="t" style="left:885.2px;top:461px;color:#111;transform:scaleX(0.950);">1</div>
<div class="t" style="left:903.5px;top:461px;color:#111;transform:scaleX(0.956);">Opti...</div>
<div class="t" style="left:954.6px;top:461px;color:#111;transform:scaleX(0.850);">ARCH</div>
<div class="t" style="left:1002.6px;top:461px;color:#111;transform:scaleX(0.950);">3</div>
<div class="t" style="left:1053.1px;top:461px;color:#111;transform:scaleX(0.915);">No</div>
<div class="t" style="left:1103.6px;top:461px;color:#111;transform:scaleX(0.994);">1 sub item</div>
<div class="t" style="left:376.7px;top:480px;color:#8a8a8a;transform:scaleX(0.928);">F.079</div>
<div class="t" style="left:507.0px;top:480px;color:#8a8a8a;transform:scaleX(0.964);">Chair Eames</div>
<div class="t" style="left:698.9px;top:480px;color:#8a8a8a;transform:scaleX(0.889);">FF&amp;E</div>
<div class="t" style="left:885.2px;top:480px;color:#8a8a8a;transform:scaleX(0.950);">2</div>
<div class="t" style="left:903.5px;top:480px;color:#8a8a8a;transform:scaleX(0.956);">Opti...</div>
<div class="t" style="left:954.6px;top:480px;color:#8a8a8a;transform:scaleX(0.850);">ARCH</div>
<div class="t" style="left:1002.6px;top:480px;color:#8a8a8a;transform:scaleX(0.950);">3</div>
<div class="t" style="left:1053.1px;top:480px;color:#8a8a8a;transform:scaleX(0.915);">No</div>
<div class="t" style="left:1104.0px;top:480px;color:#8a8a8a;transform:scaleX(0.965);">Sub item to F.078</div>
<div class="t" style="left:357.2px;top:499px;color:#111;transform:scaleX(0.930);">S.001</div>
<div class="t" style="left:507.0px;top:499px;color:#111;transform:scaleX(0.922);">GPO Double</div>
<div class="t" style="left:699.3px;top:499px;color:#111;transform:scaleX(0.974);">Services</div>
<div class="t" style="left:885.2px;top:499px;color:#111;transform:scaleX(0.950);">2</div>
<div class="t" style="left:903.5px;top:499px;color:#111;transform:scaleX(0.956);">Opti...</div>
<div class="t" style="left:953.8px;top:499px;color:#111;transform:scaleX(0.850);">ELEC</div>
<div class="t" style="left:1002.1px;top:499px;color:#111;transform:scaleX(0.950);">1</div>
<div class="t" style="left:1053.1px;top:499px;color:#111;transform:scaleX(0.915);">No</div>
<div class="t" style="left:357.2px;top:518px;color:#111;transform:scaleX(0.930);">S.036</div>
<div class="t" style="left:507.0px;top:518px;color:#111;transform:scaleX(0.917);">COM Single</div>
<div class="t" style="left:699.3px;top:518px;color:#111;transform:scaleX(0.974);">Services</div>
<div class="t" style="left:885.2px;top:518px;color:#111;transform:scaleX(0.950);">2</div>
<div class="t" style="left:903.5px;top:518px;color:#111;transform:scaleX(0.956);">Opti...</div>
<div class="t" style="left:953.8px;top:518px;color:#111;transform:scaleX(0.850);">ELEC</div>
<div class="t" style="left:1002.1px;top:518px;color:#111;transform:scaleX(0.950);">1</div>
<div class="t" style="left:1053.1px;top:518px;color:#111;transform:scaleX(0.915);">No</div>
<div class="t" style="left:357.2px;top:537px;color:#111;transform:scaleX(0.930);">S.072</div>
<div class="t" style="left:507.1px;top:537px;color:#111;transform:scaleX(0.970);">Switch - Single</div>
<div class="t" style="left:699.3px;top:537px;color:#111;transform:scaleX(0.974);">Services</div>
<div class="t" style="left:885.2px;top:537px;color:#111;transform:scaleX(0.950);">1</div>
<div class="t" style="left:903.5px;top:537px;color:#111;transform:scaleX(0.956);">Opti...</div>
<div class="t" style="left:953.8px;top:537px;color:#111;transform:scaleX(0.850);">ELEC</div>
<div class="t" style="left:1053.1px;top:537px;color:#111;transform:scaleX(0.915);">No</div>
<div class="t" style="left:357.2px;top:556px;color:#111;transform:scaleX(0.930);">S.072</div>
<div class="t" style="left:507.1px;top:556px;color:#111;transform:scaleX(0.970);">Switch - Single</div>
<div class="t" style="left:699.3px;top:556px;color:#111;transform:scaleX(0.974);">Services</div>
<div class="t" style="left:885.2px;top:556px;color:#111;transform:scaleX(0.950);">1</div>
<div class="t" style="left:903.5px;top:556px;color:#111;transform:scaleX(0.956);">Opti...</div>
<div class="t" style="left:953.8px;top:556px;color:#111;transform:scaleX(0.850);">ELEC</div>
<div class="t" style="left:1053.1px;top:556px;color:#111;transform:scaleX(0.915);">No</div>
<div class="t" style="left:357.2px;top:575px;color:#111;transform:scaleX(0.930);">S.077</div>
<div class="t" style="left:506.6px;top:575px;color:#111;transform:scaleX(0.975);">Downlight</div>
<div class="t" style="left:699.3px;top:575px;color:#111;transform:scaleX(0.974);">Services</div>
<div class="t" style="left:885.2px;top:575px;color:#111;transform:scaleX(0.950);">6</div>
<div class="t" style="left:903.5px;top:575px;color:#111;transform:scaleX(0.956);">Opti...</div>
<div class="t" style="left:953.8px;top:575px;color:#111;transform:scaleX(0.850);">ELEC</div>
<div class="t" style="left:1053.1px;top:575px;color:#111;transform:scaleX(0.915);">No</div>
<div class="t" style="left:357.2px;top:594px;color:#111;transform:scaleX(0.930);">S.077</div>
<div class="t" style="left:506.6px;top:594px;color:#111;transform:scaleX(0.975);">Downlight</div>
<div class="t" style="left:699.3px;top:594px;color:#111;transform:scaleX(0.974);">Services</div>
<div class="t" style="left:885.2px;top:594px;color:#111;transform:scaleX(0.950);">3</div>
<div class="t" style="left:903.5px;top:594px;color:#111;transform:scaleX(0.956);">Opti...</div>
<div class="t" style="left:953.8px;top:594px;color:#111;transform:scaleX(0.850);">ELEC</div>
<div class="t" style="left:1053.1px;top:594px;color:#111;transform:scaleX(0.915);">No</div>
<div class="t" style="left:357.7px;top:613px;color:#111;transform:scaleX(0.921);">W.031</div>
<div class="t" style="left:506.7px;top:613px;color:#111;transform:scaleX(0.959);">Basic Wall: P1 - Partition Type 1</div>
<div class="t" style="left:698.8px;top:613px;color:#111;transform:scaleX(0.975);">Finishes</div>
<div class="t" style="left:885.2px;top:613px;color:#111;transform:scaleX(0.950);">1</div>
<div class="t" style="left:903.5px;top:613px;color:#111;transform:scaleX(0.956);">Opti...</div>
<div class="t" style="left:953.7px;top:613px;color:#111;transform:scaleX(0.850);">IDES</div>
<div class="t" style="left:1002.1px;top:613px;color:#111;transform:scaleX(0.950);">1</div>
<div class="t" style="left:1053.1px;top:613px;color:#111;transform:scaleX(0.915);">No</div>
<div class="t" style="left:357.7px;top:632px;color:#111;transform:scaleX(0.921);">W.035</div>
<div class="t" style="left:506.7px;top:632px;color:#111;transform:scaleX(0.959);">Basic Wall: A2 - Acoustic Type 2</div>
<div class="t" style="left:698.8px;top:632px;color:#111;transform:scaleX(0.975);">Finishes</div>
<div class="t" style="left:885.2px;top:632px;color:#111;transform:scaleX(0.950);">1</div>
<div class="t" style="left:903.5px;top:632px;color:#111;transform:scaleX(0.956);">Opti...</div>
<div class="t" style="left:953.7px;top:632px;color:#111;transform:scaleX(0.850);">IDES</div>
<div class="t" style="left:1002.1px;top:632px;color:#111;transform:scaleX(0.950);">1</div>
<div class="t" style="left:1053.1px;top:632px;color:#111;transform:scaleX(0.915);">No</div>
<div style="left:317px;top:457px;width:896px;height:41px;box-sizing:border-box;border:3px solid #f53d3d;box-shadow:0 2px 5px rgba(0,0,0,0.35),inset 3px 0 4px -2px rgba(0,0,0,0.25)"></div>
</body></html>
